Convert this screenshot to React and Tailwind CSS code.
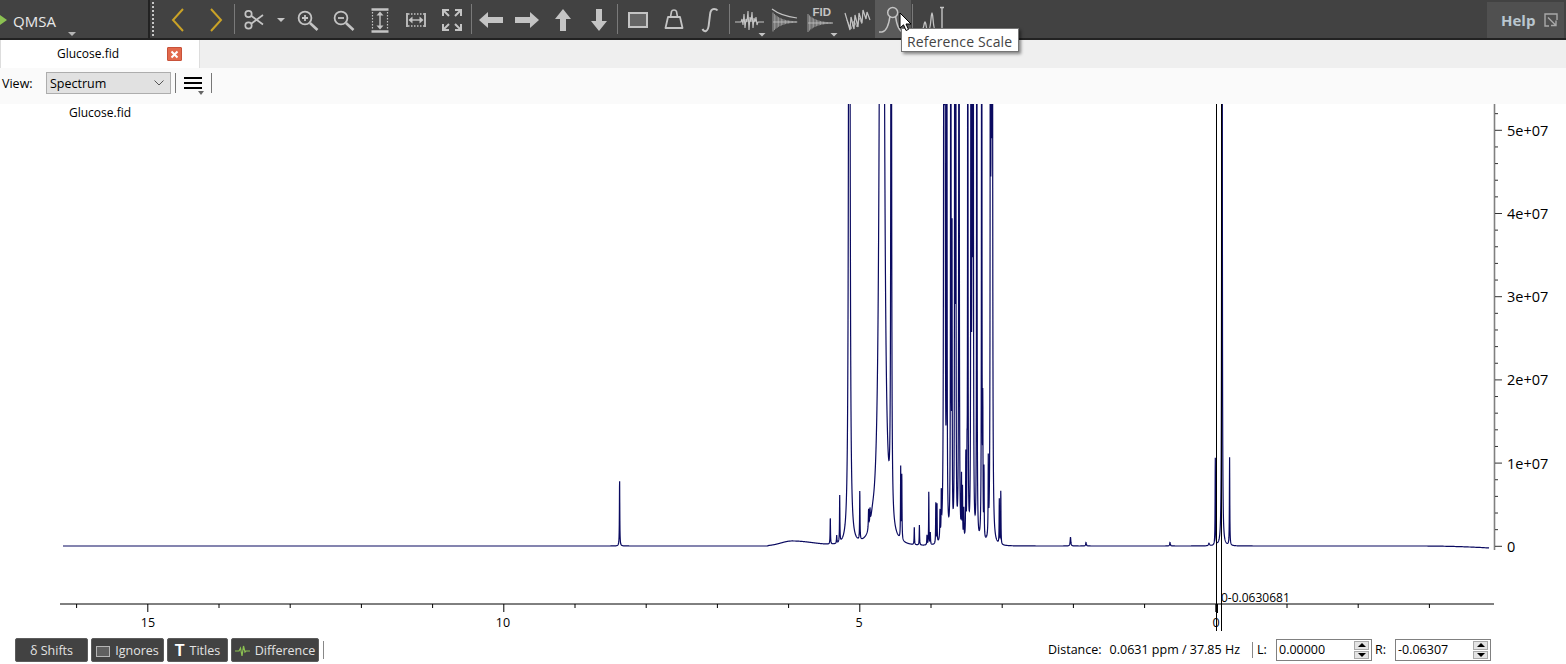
const FONT = { fontFamily: '"Open Sans","Noto Sans","Liberation Sans",sans-serif' };

const peaks = [
  [619.6, 67, 0.22], [830.3, 27, 0.22], [836.7, 8, 0.25], [839.7, 47, 0.22], [849.3, 1800, 0.5], [859.8, 50, 0.22],
  [868.6, 20, 0.3], [870, 15, 0.3], [872.5, 8, 2.5], [881.9, 3000, 1.2], [891.2, 1000, 0.35], [900.7, 72, 0.22], [901.8, 66, 0.22],
  [914.3, 18, 0.22], [919.4, 20, 0.22], [927, 10, 0.25], [928.8, 55, 0.2], [930.3, 12, 0.25],
  [935.8, 42, 0.2], [937, 40, 0.2], [940, 28, 0.25], [941.3, 42, 0.2], [944, 1200, 0.3], [945, 1000, 0.2],
  [946.8, 1000, 0.2], [950.8, 1000, 0.22], [952, 300, 0.2], [954.8, 1000, 0.2], [955.8, 700, 0.2],
  [959, 1000, 0.25], [961.5, 60, 0.2], [962.5, 50, 0.2], [963.8, 30, 0.25], [965.8, 85, 0.2], [967, 60, 0.2],
  [967.8, 1000, 0.18], [971, 1000, 0.2], [972.2, 1000, 0.2], [973.2, 1000, 0.2], [976.8, 1000, 0.2],
  [981.7, 1000, 0.2], [982.8, 125, 0.2], [984, 70, 0.2], [988.3, 75, 0.2], [990.4, 1000, 0.2], [991.3, 1000, 0.2],
  [992.3, 1000, 0.3], [999.3, 45, 0.2], [1000.8, 55, 0.2], [1070.5, 9, 0.4], [1086, 3.5, 0.4], [1170, 3.5, 0.4],
  [1209, 2.5, 0.6], [1215.3, 88, 0.22], [1222, 1600, 0.2], [1229.6, 88, 0.22],
];

function signal(x) {
  let s = 0;
  for (let i = 0; i < peaks.length; i++) {
    const p = peaks[i];
    const d = x - p[0];
    s += ((p[1] * p[2] * p[2]) / (d * d + p[2] * p[2])) * Math.exp(-Math.abs(d) / 25);
  }
  if (x > 768 && x < 845) {
    const side = x < 792 ? 11 : 22;
    s += 5 * Math.exp(-((x - 792) * (x - 792)) / (2 * side * side));
  }
  if (x > 1420) s -= ((x - 1420) / 70) * ((x - 1420) / 70) * 2;
  return s;
}

function spectrumPath() {
  const out = [];
  for (let x = 63; x <= 1490; x += x > 610 && x < 1240 ? 0.12 : 1) {
    out.push(x.toFixed(2) + ' ' + Math.max(-200, 546 - signal(x)).toFixed(2));
  }
  return 'M' + out.join('L');
}
const SPECTRUM = spectrumPath();

const xTicks = [];
for (let i = 0; i < 20; i++) xTicks.push(76.6 + i * 71.2);
const yTicks = [];
for (let i = 0; i < 27; i++) yTicks.push(546.3 - i * 16.64);

function Chart() {
  return (
    <svg className="absolute left-0 top-0 block" width="1566" height="532" viewBox="0 104 1566 532" style={FONT}>
      <path d={SPECTRUM} fill="none" stroke="#0a0a60" strokeWidth="1.2" />
      <line x1="60" y1="604" x2="1494" y2="604" stroke="#000" strokeWidth="1" />
      {xTicks.map((x, i) => (
        <line key={i} x1={x} x2={x} y1="604" y2={i % 5 === 1 ? 612 : 608} stroke="#000" />
      ))}
      <line x1="1494.5" y1="104" x2="1494.5" y2="550" stroke="#808080" strokeWidth="1.6" />
      {yTicks.map((y, i) => (
        <line key={i} x1="1495" x2={i % 5 === 0 ? 1502 : 1498} y1={y} y2={y} stroke="#333" />
      ))}
      {[['5e+07', 135.5], ['4e+07', 218.5], ['3e+07', 301.5], ['2e+07', 384.5], ['1e+07', 468.5], ['0', 551.5]].map(([t, y]) => (
        <text key={t} x="1507" y={y} fontSize="14.5" fill="#000">{t}</text>
      ))}
      {[['15', 148], ['10', 503], ['5', 859], ['0', 1216]].map(([t, x]) => (
        <text key={t} x={x} y="627" fontSize="12.5" fill="#000" textAnchor="middle">{t}</text>
      ))}
      <line x1="1216.5" x2="1216.5" y1="104" y2="631" stroke="#000" />
      <line x1="1221.5" x2="1221.5" y1="104" y2="631" stroke="#000" />
      <line x1="1217" x2="1217" y1="604" y2="613" stroke="#000" strokeWidth="2" />
      <text x="1221" y="602" fontSize="12" fill="#000">0-0.0630681</text>
    </svg>
  );
}

const C = '#c4c4c4';

function Ico({ children }) {
  return <svg width="36" height="38" viewBox="0 0 36 38" fill="none" className="block">{children}</svg>;
}

function Spikes({ x0, y0, n, amp, tail }) {
  const l = [];
  for (let i = 0; i < n; i++) {
    const a = amp * Math.exp(-i / tail);
    const x = x0 + i * 1.4;
    l.push(<line key={i} x1={x} x2={x} y1={y0 - a} y2={y0 + a} stroke={C} strokeWidth="0.7" />);
  }
  return <>{l}</>;
}

const DownMark = ({ x, y }) => <path d={`M${x - 3.5} ${y}h7l-3.5 3.5z`} fill={C} />;

const icons = {
  back: <Ico><path d="M23 9 L13 20 L23 31" stroke="#c9a227" strokeWidth="2" /></Ico>,
  fwd: <Ico><path d="M13 9 L23 20 L13 31" stroke="#c9a227" strokeWidth="2" /></Ico>,
  scissors: (
    <Ico>
      <circle cx="13.5" cy="14" r="3.2" stroke={C} strokeWidth="1.7" />
      <circle cx="13.5" cy="25.5" r="3.2" stroke={C} strokeWidth="1.7" />
      <path d="M16.2 15.8 L28 24.5 M16.2 23.7 L28 15" stroke={C} strokeWidth="1.7" />
    </Ico>
  ),
  zoomIn: (
    <Ico>
      <circle cx="15" cy="18" r="6.4" stroke={C} strokeWidth="1.8" />
      <path d="M20 23 L27.500 30" stroke={C} strokeWidth="2.6" />
      <path d="M12 18h6M15 15v6" stroke={C} strokeWidth="1.8" />
    </Ico>
  ),
  zoomOut: (
    <Ico>
      <circle cx="15" cy="18" r="6.4" stroke={C} strokeWidth="1.8" />
      <path d="M20 23 L27.500 30" stroke={C} strokeWidth="2.6" />
      <path d="M12 18h6" stroke={C} strokeWidth="1.8" />
    </Ico>
  ),
  fitH: (
    <Ico>
      <path d="M9.500 9.500h17M9.500 31.500h17" stroke={C} strokeWidth="2.4" />
      <path d="M10.500 12v17M25.500 12v17" stroke={C} strokeWidth="1.2" strokeDasharray="1.500 1.500" />
      <path d="M18 13v14" stroke={C} strokeWidth="1.4" />
      <path d="M18 11.500l3.500 4h-7zM18 29.500l3.500-4h-7z" fill={C} />
    </Ico>
  ),
  fitW: (
    <Ico>
      <path d="M9 13v14M27 13v14" stroke={C} strokeWidth="1.800" />
      <path d="M10 14h16M10 26h16" stroke={C} strokeWidth="1.400" strokeDasharray="1.500 1.500" />
      <path d="M12 20h12" stroke={C} strokeWidth="1.400" />
      <path d="M10.500 20l4-3.500v7zM25.500 20l-4-3.500v7z" fill={C} />
    </Ico>
  ),
  expand: (
    <Ico>
      <g stroke={C} strokeWidth="2">
        <path d="M9 16v-6h6M27 16v-6h-6M9 24v6h6M27 24v6h-6" />
        <path d="M10 11l5 5M26 11l-5 5M10 29l5-5M26 29l-5-5" />
      </g>
    </Ico>
  ),
  left: <Ico><path d="M6 20 L15 12 V17 H30 V23 H15 V28 Z" fill={C} /></Ico>,
  right: <Ico><path d="M30 20 L21 12 V17 H6 V23 H21 V28 Z" fill={C} /></Ico>,
  up: <Ico><path d="M18 9 L26 19 H21 V31 H15 V19 H10 Z" fill={C} /></Ico>,
  down: <Ico><path d="M18 31 L26 21 H21 V9 H15 V21 H10 Z" fill={C} /></Ico>,
  rect: <Ico><rect x="9" y="13" width="18" height="14" fill="#666666" stroke={C} strokeWidth="2" /></Ico>,
  bag: (
    <Ico>
      <path d="M9.500 28 L12 17 H24 L26.500 28 Z" stroke={C} strokeWidth="1.800" strokeLinejoin="round" />
      <path d="M14.500 17 L15.500 11.500 Q16 10 18 10 Q20 10 20.500 11.500 L21.500 17" stroke={C} strokeWidth="1.600" />
    </Ico>
  ),
  integral: <Ico><path d="M10.500 29 Q12 32 14 31 Q16.500 30 17 23 L18 15 Q18.500 9 22 9 Q24.500 9 25.500 10.500" stroke={C} strokeWidth="2" /></Ico>,
  wave: (
    <Ico>
      <path d="M4 22H10L11 19L12 25L13 14L14 28L15 19L16 22L17 11L18 30L19 17L20 22L21 12L22 28L23 18L24 22L25 17L26 25L27 22H33" stroke={C} strokeWidth="1.100" />
      <DownMark x={31} y={33} />
    </Ico>
  ),
  decay: (
    <Ico>
      <path d="M5 9 Q14 16 30 18" stroke={C} strokeWidth="1.200" />
      <Spikes x0={6} y0={22} n={18} amp={9.5} tail={6} />
      <path d="M6 22H30" stroke={C} strokeWidth="0.800" />
    </Ico>
  ),
  fid: (
    <Ico>
      <text x="9.500" y="16" fontSize="11.500" fontWeight="700" fill={C} fontFamily="Liberation Sans">FID</text>
      <Spikes x0={5} y0={23} n={18} amp={9} tail={6} />
      <path d="M5 23H30" stroke={C} strokeWidth="0.800" />
      <DownMark x={31} y={33} />
    </Ico>
  ),
  noisy: (
    <Ico>
      <path d="M6 13L11 30L12 17L15 29L16 15L19 27L20 13L23 23L24 10L27 19L28 12L31 20" stroke={C} strokeWidth="1.200" />
      <path d="M8 20L12 29L15 21L18 27L20 18L23 24" stroke={C} strokeWidth="0.700" />
    </Ico>
  ),
  ref: (
    <Ico>
      <circle cx="17.700" cy="12.500" r="5" stroke={C} strokeWidth="1.500" />
      <path d="M4 32H7Q13 31 15 16M20.500 16Q22.500 31 28 32H31" stroke={C} strokeWidth="1.500" />
    </Ico>
  ),
  peaks: (
    <Ico>
      <path d="M5 31Q8 31 9 25Q10 19 11 25Q12 31 13 31Q15 31 16 19Q17 7 18 19Q19 31 21 31" stroke={C} strokeWidth="1.300" />
      <path d="M27 7V30M25 7.500H29M25 30H29" stroke={C} strokeWidth="1.400" />
    </Ico>
  ),
};

const Btn = ({ n, hover }) => (
  <div className={`w-9 h-[38px] shrink-0 ${hover ? 'bg-[#5a5a5a]' : ''}`}>{icons[n]}</div>
);
const Sep = ({ ml = 'ml-0', mr = 'mr-0' }) => <div className={`w-px h-[30px] bg-[#7a7a7a] shrink-0 ${ml} ${mr}`} />;

function Toolbar() {
  return (
    <div className="h-10 shrink-0 flex items-start bg-[#424242] border-b-2 border-[#222222] text-[#e8e8e8]">
      <div className="w-[148px] h-[38px] shrink-0 relative flex items-center pl-[13px] pt-[4px] text-[15px]">
        <div className="absolute left-0 top-[15px] w-0 h-0 border-y-[5px] border-y-transparent border-l-[7px] border-l-[#8cc152]" />
        QMSA
        <div className="absolute left-[68px] top-[32px] w-0 h-0 border-x-[4px] border-x-transparent border-t-[4px] border-t-[#b5b5b5]" />
      </div>
      <div className="w-[2px] h-[38px] bg-[#222222] shrink-0" />
      <div className="ml-[2px] mt-[2px] h-[34px] w-[2px] shrink-0 border-l-2 border-dotted border-[#c8c8c8]" />
      <div className="flex items-center pl-[6px]">
        <Btn n="back" />
        <div className="w-[2px]" />
        <Btn n="fwd" />
        <Sep />
        <Btn n="scissors" />
        <div className="w-[19px] h-[38px] shrink-0 relative">
          <div className="absolute left-[6px] top-[18px] w-0 h-0 border-x-[4px] border-x-transparent border-t-[4px] border-t-[#c4c4c4]" />
        </div>
        <Btn n="zoomIn" />
        <Btn n="zoomOut" />
        <Btn n="fitH" />
        <Btn n="fitW" />
        <Btn n="expand" />
        <Sep ml="ml-px" mr="mr-px" />
        <Btn n="left" />
        <Btn n="right" />
        <Btn n="up" />
        <Btn n="down" />
        <Sep mr="mr-[2px]" />
        <Btn n="rect" />
        <Btn n="bag" />
        <Btn n="integral" />
        <Sep ml="ml-px" mr="mr-px" />
        <Btn n="wave" />
        <Btn n="decay" />
        <Btn n="fid" />
        <Btn n="noisy" />
        <Btn n="ref" hover />
        <Sep ml="ml-px" mr="mr-[2px]" />
        <Btn n="peaks" />
      </div>
      <div className="ml-auto mr-[2px] mt-[2px] w-[77px] h-9 bg-[#505050] flex items-center pl-[14px] gap-[9px] text-[15px] font-bold text-[#b9c6cf]">
        Help
        <svg width="14" height="14" viewBox="0 0 14 14" fill="none">
          <path d="M5 13H1V1H13V7" stroke="#a8a8a8" strokeWidth="1.400" />
          <path d="M4 4.500L11.500 12M12 7.500V12.500H7" stroke="#a8a8a8" strokeWidth="1.400" />
        </svg>
      </div>
    </div>
  );
}

function TabRow() {
  return (
    <div className="h-7 shrink-0 flex bg-[#efefef]">
      <div className="w-[200px] h-7 bg-white border-x border-[#dddddd] flex items-center relative">
        <span className="absolute left-[56px] text-[12px] text-black">Glucose.fid</span>
        <div className="absolute left-[166px] top-[7px] w-[15px] h-[14px] bg-[#e2694c] border border-[#c8523a] rounded-[1px] flex items-center justify-center">
          <svg width="9" height="9" viewBox="0 0 9 9"><path d="M1.500 1.500L7.500 7.500M7.500 1.500L1.500 7.500" stroke="#fff" strokeWidth="2" /></svg>
        </div>
      </div>
    </div>
  );
}

function ViewRow() {
  return (
    <div className="h-9 shrink-0 flex items-center pb-[6px] bg-[#fafafa] text-[12.5px] text-black">
      <span className="ml-[2px] w-[44px] pt-[2px]">View:</span>
      <div className="w-[125px] h-[22px] bg-[#e1e1e1] border border-[#adadad] flex items-center pl-[3px] pt-[2px] relative">
        Spectrum
        <svg className="absolute right-[6px] top-[7px]" width="10" height="6" viewBox="0 0 10 6" fill="none"><path d="M0.500 0.500L5 5L9.500 0.500" stroke="#555" /></svg>
      </div>
      <div className="ml-1 w-px h-5 bg-[#777777]" />
      <div className="relative w-[35px] h-5 flex flex-col justify-center gap-[3px] pl-2 pr-[9px]">
        <div className="h-[2px] bg-black" />
        <div className="h-[2px] bg-black" />
        <div className="h-[2px] bg-black" />
        <div className="absolute left-[22px] top-[18px] w-0 h-0 border-x-[3px] border-x-transparent border-t-[4px] border-t-[#666666]" />
      </div>
      <div className="w-px h-5 bg-[#777777]" />
    </div>
  );
}

const BBtn = ({ w, children }) => (
  <div className={`${w} h-6 bg-[#424242] border border-[#5c5c5c] rounded-[2px] text-[#e2e2e2] text-[12.5px] flex items-center justify-center gap-[5px] shrink-0 whitespace-nowrap pt-[2px]`}>
    {children}
  </div>
);

function Spin({ value }) {
  return (
    <div className="w-[96px] h-[22px] bg-white border border-[#808080] flex items-center justify-between pl-[2px] pr-[2px]">
      <span className="pt-px">{value}</span>
      <div className="w-[15px] h-[18px] flex flex-col gap-px">
        <div className="flex-1 bg-[#e4e4e4] border border-[#aaaaaa] flex items-center justify-center">
          <div className="w-0 h-0 border-x-[4px] border-x-transparent border-b-[4px] border-b-black" />
        </div>
        <div className="flex-1 bg-[#e4e4e4] border border-[#aaaaaa] flex items-center justify-center">
          <div className="w-0 h-0 border-x-[4px] border-x-transparent border-t-[4px] border-t-black" />
        </div>
      </div>
    </div>
  );
}

function BottomRow() {
  return (
    <div className="h-7 shrink-0 flex items-center bg-white pl-[15px] pr-[75px] text-[12.5px] text-black">
      <BBtn w="w-[73px]">δ Shifts</BBtn>
      <div className="w-[3px]" />
      <BBtn w="w-[73px]">
        <div className="w-[14px] h-[11px] bg-[#606060] border border-[#b5b5b5]" />
        Ignores
      </BBtn>
      <div className="w-[3px]" />
      <BBtn w="w-[61px]">
        <span className="font-bold text-[16px] leading-none text-white" style={{ fontFamily: '"Liberation Sans",sans-serif' }}>T</span>
        Titles
      </BBtn>
      <div className="w-[3px]" />
      <BBtn w="w-[88px]">
        <svg width="15" height="12" viewBox="0 0 15 12" fill="none"><path d="M0 6H4L5.500 3L7 11L8.500 1L10 7L11 6H15" stroke="#8cc152" strokeWidth="1.200" /></svg>
        Difference
      </BBtn>
      <div className="ml-1 w-px h-[18px] bg-[#888888]" />
      <div className="ml-auto w-[203px] flex justify-between whitespace-nowrap pr-[11px] pt-px">
        <span>Distance:</span>
        <span>0.0631 ppm / 37.85 Hz</span>
      </div>
      <div className="w-px h-4 bg-[#888888] ml-px" />
      <span className="ml-1 w-[19px] pt-px">L:</span>
      <Spin value="0.00000" />
      <span className="ml-[3px] w-[20px] pt-px">R:</span>
      <Spin value="-0.06307" />
    </div>
  );
}

export default function App() {
  return (
    <div className="relative w-[1566px] h-[664px] overflow-hidden flex flex-col bg-white" style={FONT}>
      <Toolbar />
      <TabRow />
      <ViewRow />
      <div className="flex-1 relative overflow-hidden bg-white">
        <Chart />
        <span className="absolute left-[69px] top-0 text-[12px] text-black">Glucose.fid</span>
      </div>
      <BottomRow />
      <div className="absolute left-[901px] top-[28px] w-[118px] h-[24px] bg-white border border-[#767676] shadow-[2px_2px_3px_rgba(0,0,0,0.45)] flex items-center pl-[5px] pt-[2px] text-[14px] tracking-[0.15px] text-[#444444] whitespace-nowrap">
        Reference Scale
      </div>
      <svg className="absolute left-[899px] top-[12px]" width="14" height="21" viewBox="0 0 14 21">
        <path d="M1 1V16L4.500 12.800L7 18.500L9.500 17.400L7 12H12Z" fill="#fff" stroke="#000" strokeWidth="1" />
      </svg>
    </div>
  );
}
